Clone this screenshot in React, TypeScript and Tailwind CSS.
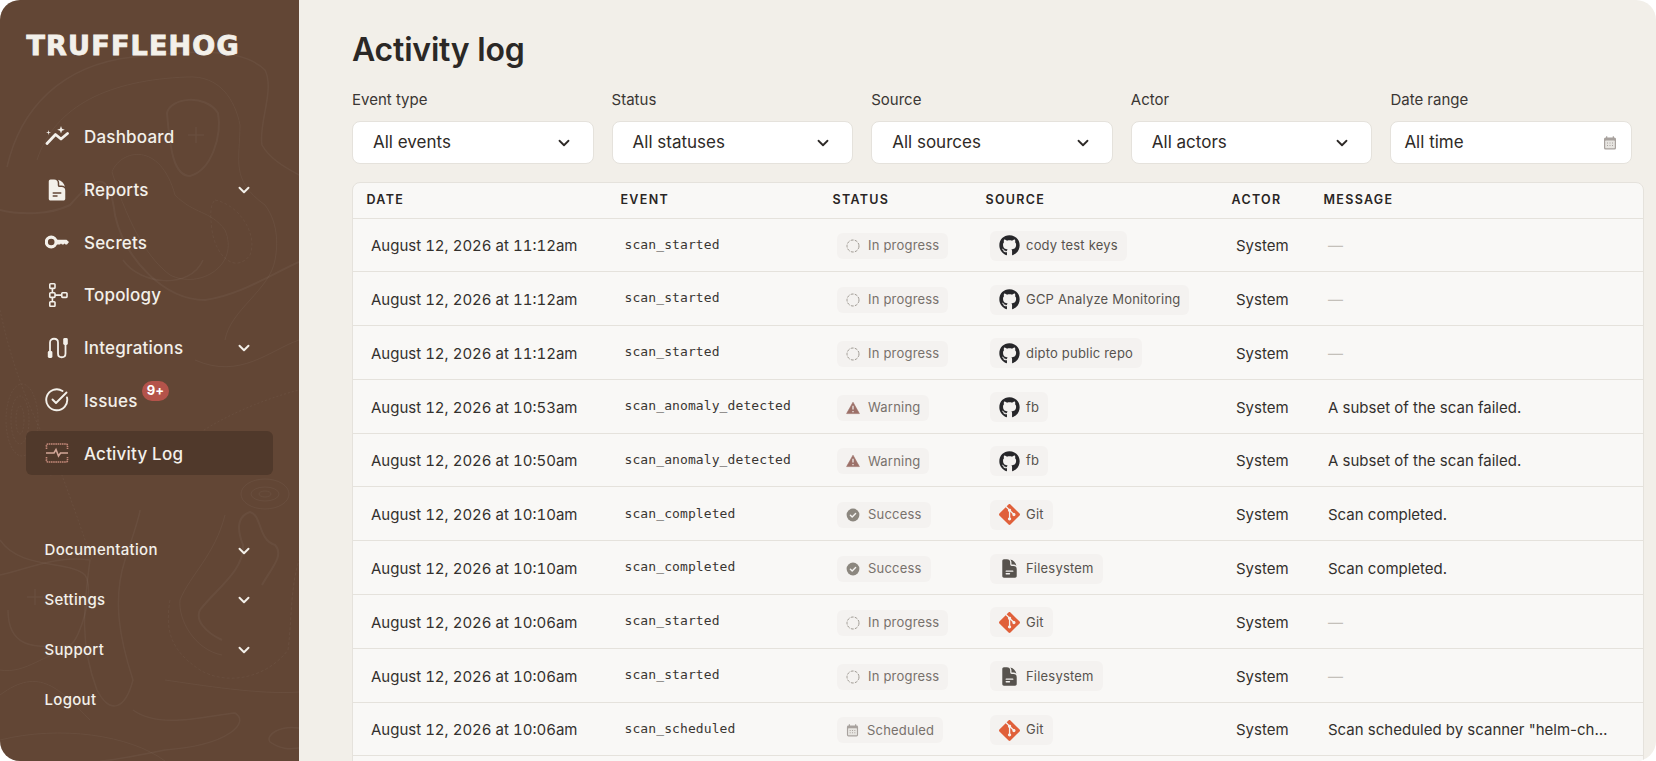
import { ChevronDown } from "lucide-react";
import { FaGithub } from "react-icons/fa";
import { SiGit } from "react-icons/si";
import { HiDocumentText } from "react-icons/hi2";
import type { ReactNode } from "react";

function DashboardIcon() {
  return (
    <svg width="24" height="24" viewBox="0 0 24 24" fill="none" stroke="currentColor">
      <path d="M2 18.5 L10.5 9.5 L16 14 L22.5 8.5" strokeWidth="2.8" strokeLinecap="round" strokeLinejoin="round" />
      <path d="M16 1 L17 3.8 L19.8 4.8 L17 5.8 L16 8.6 L15 5.8 L12.2 4.8 L15 3.8 Z" fill="currentColor" strokeWidth="0" />
      <path d="M3.5 5 L4 7 L6 7.5 L4 8 L3.5 10 L3 8 L1 7.5 L3 7 Z" fill="currentColor" strokeWidth="0" />
    </svg>
  );
}

function KeyIcon() {
  return (
    <svg width="24" height="24" viewBox="0 0 24 24" fill="none">
      <circle cx="6.2" cy="12" r="4.9" stroke="currentColor" strokeWidth="3.2" />
      <path d="M11 9.8 H21.5 L24 12 L22 14.6 H20.5 L19.5 13.4 L18.5 14.6 H17 L16 13.4 L15 14.6 H11 Z" fill="currentColor" />
    </svg>
  );
}

function TopologyIcon() {
  return (
    <svg width="24" height="24" viewBox="0 0 24 24" fill="none" stroke="currentColor" strokeWidth="1.6">
      <rect x="4.8" y="0.8" width="5.2" height="4.6" rx="0.8" />
      <rect x="4.8" y="9.8" width="5.2" height="4.6" rx="0.8" />
      <rect x="4.8" y="18.8" width="5.2" height="4.6" rx="0.8" />
      <rect x="16.8" y="9.8" width="5.2" height="4.6" rx="0.8" />
      <path d="M7.4 5.4 V9.8 M7.4 14.4 V18.8 M10 12.1 H16.8" />
    </svg>
  );
}

function IntegrationsIcon() {
  return (
    <svg width="24" height="24" viewBox="0 0 24 24" fill="none">
      <path d="M5 15 V6.5 C5 1.5 13 1.5 13 6.5 V17.5 C13 22.5 20.5 22.5 20.5 17.5 V8" stroke="currentColor" strokeWidth="1.8" />
      <rect x="2.8" y="15" width="4.6" height="7" rx="1.4" fill="currentColor" />
      <rect x="18.2" y="2" width="4.6" height="7" rx="1.4" fill="currentColor" />
    </svg>
  );
}

function IssuesIcon() {
  return (
    <svg width="24" height="24" viewBox="0 0 24 24" fill="none" stroke="currentColor" strokeWidth="1.9" strokeLinecap="round" strokeLinejoin="round">
      <path d="M22 9.5 A10.5 10.5 0 1 1 17.5 3" />
      <path d="M7.5 11.5 L11 15 L21.5 4.5" />
    </svg>
  );
}

function ActivityIcon() {
  return (
    <svg width="24" height="24" viewBox="0 0 24 24" fill="none" stroke="#c4897a" strokeWidth="1.6">
      <path d="M1.5 8 V5 A1.5 1.5 0 0 1 3 3 H21 A1.5 1.5 0 0 1 22.5 5 V8" strokeDasharray="1.6 0.6" />
      <path d="M1.5 16 V19 A1.5 1.5 0 0 0 3 21 H21 A1.5 1.5 0 0 0 22.5 19 V16" strokeDasharray="1.6 0.6" />
      <path d="M1 12 H9 L11 8.5 L13.5 15 L15.5 12 H23" stroke="#d2a698" />
    </svg>
  );
}

function CalendarIcon({ size = 14, color = "#a8a29e" }: { size?: number; color?: string }) {
  return (
    <svg width={size} height={size} viewBox="0 0 14 14" fill="none">
      <rect x="1" y="1.5" width="12" height="12" rx="1.6" fill={color} />
      <rect x="3" y="0.3" width="1.3" height="2.4" fill={color} />
      <rect x="9.7" y="0.3" width="1.3" height="2.4" fill={color} />
      <rect x="2.2" y="4.6" width="9.6" height="7.6" rx="0.6" fill="#e7e5e1" />
      <path d="M4 7 H5 M6.5 7 H7.5 M9 7 H10 M4 9.5 H5 M6.5 9.5 H7.5 M9 9.5 H10" stroke={color} strokeWidth="1.1" />
    </svg>
  );
}

function ProgressIcon() {
  return (
    <svg width="14" height="14" viewBox="0 0 14 14" fill="none">
      <circle cx="7" cy="7" r="6" stroke="#9f9a93" strokeWidth="1" strokeDasharray="3 1.2" />
    </svg>
  );
}

function WarningIcon() {
  return (
    <svg width="14" height="14" viewBox="0 0 14 14" fill="none">
      <path d="M7 1.2 L13.4 12.6 H0.6 Z" fill="#9c7068" stroke="#9c7068" strokeWidth="0.6" strokeLinejoin="round" />
      <path d="M7 4.8 V8.6 M7 10 V11.2" stroke="#f4f2f0" strokeWidth="1.2" />
    </svg>
  );
}

function SuccessIcon() {
  return (
    <svg width="14" height="14" viewBox="0 0 14 14" fill="none">
      <circle cx="7" cy="7" r="6.4" fill="#8c877f" />
      <path d="M4.4 7.2 L6.2 9 L9.6 5.4" stroke="#f4f2f0" strokeWidth="1.4" strokeLinecap="round" strokeLinejoin="round" />
    </svg>
  );
}

function Contours() {
  return (
    <svg className="absolute inset-0 pointer-events-none" width="299" height="761" viewBox="0 0 299 761" fill="none" stroke="#ffffff" strokeOpacity="0.042">
      <path strokeWidth="2" d="M167 113 C170 98 205 93 218 113 C222 135 212 170 190 176 C174 176 170 150 167 113 Z" />
      <path strokeWidth="1.5" d="M188 135 H204 M196 127 V143 M27 597 H43 M35 589 V605" />
      <path strokeWidth="1.5" d="M7 167 C20 110 60 65 133 57 C180 52 240 45 265 70 C275 90 258 125 262 145 C270 160 290 170 299 175" />
      <path strokeWidth="1" d="M37 160 C55 105 110 80 187 77 C220 75 235 100 240 125 C240 160 230 180 265 205 C280 225 277 250 275 260 C270 290 230 310 225 340" />
      <path strokeWidth="2" d="M0 210 C20 215 50 215 70 205 C100 170 110 175 115 215 C125 260 165 300 205 300 C240 295 270 275 299 262" />
      <path strokeWidth="1" d="M112 172 C120 150 160 140 175 195 C195 215 210 210 225 230 C240 265 200 290 170 275 C150 260 130 230 112 172 Z" />
      <path strokeWidth="1.5" d="M123 260 C140 285 190 290 203 260" />
      <path strokeWidth="1" strokeDasharray="3 2" d="M215 200 C240 205 258 235 250 255 C235 275 215 255 212 230 C210 215 210 205 215 200 Z" />
      <path strokeWidth="1" d="M0 310 C15 380 35 420 60 470 C75 510 85 540 92 560" strokeDasharray="2 2" />
      <g strokeWidth="1" strokeDasharray="2 1.5">
        <ellipse cx="20" cy="420" rx="4" ry="14" />
        <ellipse cx="20" cy="420" rx="9" ry="24" />
        <ellipse cx="22" cy="420" rx="16" ry="36" />
      </g>
      <ellipse cx="265" cy="494" rx="6" ry="3" strokeWidth="1" />
      <ellipse cx="265" cy="494" rx="14" ry="7" strokeWidth="1" />
      <ellipse cx="265" cy="494" rx="24" ry="15" strokeWidth="1" />
      <path strokeWidth="1" d="M195 360 C240 380 270 350 299 340" />
      <path strokeWidth="1" strokeDasharray="2 2" d="M50 475 C90 470 150 475 190 440 C215 420 260 400 299 390" />
      <path strokeWidth="2" d="M222 640 C205 632 195 620 200 610 C215 590 245 570 243 545 C235 525 240 515 250 512 C262 515 258 540 275 545 C285 555 270 570 262 585" />
      <path strokeWidth="1" d="M222 655 C195 650 178 620 180 600 C190 575 215 555 225 515" />
      <path strokeWidth="1" strokeDasharray="3 2" d="M170 600 C165 630 170 650 200 670 C225 685 265 680 288 650 C292 620 290 590 299 560" />
      <path strokeWidth="1.5" d="M0 540 C20 570 70 560 85 575 C95 590 80 640 70 645 C30 650 8 645 8 610" />
      <path strokeWidth="1.5" d="M0 575 C25 570 55 555 90 560 C85 600 78 640 97 690 C110 715 125 710 133 680 C120 640 112 600 125 560 C135 530 140 515 140 510" />
      <path strokeWidth="1.5" d="M133 710 C160 730 210 715 235 713 C250 722 230 745 165 750 C140 755 110 761 100 761" />
      <path strokeWidth="1" d="M165 680 C200 685 260 695 299 692" />
      <path strokeWidth="1" d="M0 740 C60 725 130 735 165 761 M0 695 C40 665 60 690 90 720 M0 670 C25 675 50 650 60 655" />
      <path strokeWidth="1.5" d="M299 728 C280 725 265 735 270 742 C285 752 295 748 299 748" />
    </svg>
  );
}

const navItems: { label: string; icon: ReactNode; chevron?: boolean; active?: boolean; badge?: string }[] = [
  { label: "Dashboard", icon: <DashboardIcon /> },
  { label: "Reports", icon: <HiDocumentText size={28} />, chevron: true },
  { label: "Secrets", icon: <KeyIcon /> },
  { label: "Topology", icon: <TopologyIcon /> },
  { label: "Integrations", icon: <IntegrationsIcon />, chevron: true },
  { label: "Issues", icon: <IssuesIcon />, badge: "9+" },
  { label: "Activity Log", icon: <ActivityIcon />, active: true },
];

const footerItems = [
  { label: "Documentation", chevron: true },
  { label: "Settings", chevron: true },
  { label: "Support", chevron: true },
  { label: "Logout", chevron: false },
];

function Sidebar() {
  return (
    <aside className="relative w-[299px] shrink-0 h-full bg-[#624635] text-[#f3f0ea] overflow-hidden">
      <Contours />
      <div className="relative flex flex-col h-full">
        <div className="ml-[26.5px] mt-[30px] h-[30px] flex items-center font-['DejaVu_Sans'] font-bold text-[27px] leading-none tracking-[1.2px] [-webkit-text-stroke:0.9px_#f3f0ea]">
          TRUFFLEHOG
        </div>
        <nav className="mt-[55px] mx-[26px] w-[247px] flex flex-col gap-[8.7px]">
          {navItems.map((item) => (
            <div
              key={item.label}
              className={
                item.active
                  ? "h-[44px] flex items-center pl-[19px] pr-[20px] rounded-md bg-[#50392b]"
                  : "h-[44px] flex items-center pl-[19px] pr-[20px] rounded-md"
              }
            >
              <span className="w-[24px] h-[24px] flex items-center justify-center">{item.icon}</span>
              <span className={item.active ? "relative top-[2px] ml-[15px] text-[17px] font-medium tracking-[0.2px]" : "relative top-[1px] ml-[15px] text-[17px] font-medium tracking-[0.2px]"}>
                {item.label}
                {item.badge && (
                  <span className="absolute left-[58px] -top-[8px] h-[20px] w-[27px] rounded-full bg-[#b4534a] text-white text-[13px] font-bold flex items-center justify-center">
                    {item.badge}
                  </span>
                )}
              </span>
              {item.chevron && <ChevronDown size={18} strokeWidth={2.6} className="ml-auto" />}
            </div>
          ))}
        </nav>
        <div className="mt-[60px] ml-[44.5px] w-[209px] flex flex-col gap-[18.8px]">
          {footerItems.map((item) => (
            <div key={item.label} className="h-[31px] flex items-center justify-between text-[15px] font-medium tracking-[0.3px]">
              {item.label}
              {item.chevron && <ChevronDown size={18} strokeWidth={2.6} className="mr-[1px]" />}
            </div>
          ))}
        </div>
      </div>
    </aside>
  );
}

const filters = [
  { label: "Event type", value: "All events" },
  { label: "Status", value: "All statuses" },
  { label: "Source", value: "All sources" },
  { label: "Actor", value: "All actors" },
];

function Filters() {
  return (
    <div className="mt-[19px] mr-[12px] grid grid-cols-5 gap-[18px]">
      {filters.map((f) => (
        <div key={f.label}>
          <div className="text-[15px] leading-[20px] text-[#3a3633]">{f.label}</div>
          <div className="mt-[11px] h-[43px] flex items-center justify-between pl-[20px] pr-[20px] rounded-lg bg-white border border-[#e5e2dc] text-[17px] text-[#2e2a27]">
            {f.value}
            <ChevronDown size={18} strokeWidth={2.4} />
          </div>
        </div>
      ))}
      <div>
        <div className="text-[15px] leading-[20px] text-[#3a3633]">Date range</div>
        <div className="mt-[11px] h-[43px] flex items-center justify-between pl-[13px] pr-[14px] rounded-lg bg-white border border-[#e5e2dc] text-[17px] text-[#2e2a27]">
          All time
          <CalendarIcon />
        </div>
      </div>
    </div>
  );
}

type Status = "progress" | "warning" | "success" | "scheduled";
type Source = "github" | "git" | "file";

const statusMeta: Record<Status, { label: string; icon: ReactNode }> = {
  progress: { label: "In progress", icon: <ProgressIcon /> },
  warning: { label: "Warning", icon: <WarningIcon /> },
  success: { label: "Success", icon: <SuccessIcon /> },
  scheduled: { label: "Scheduled", icon: <CalendarIcon size={13} /> },
};

const sourceIcon: Record<Source, ReactNode> = {
  github: <FaGithub size={21} className="text-[#27272a]" />,
  git: <SiGit size={21} className="text-[#e0603a]" />,
  file: <HiDocumentText size={21} className="text-[#57534e]" />,
};

const rows: { date: string; event: string; status: Status; source: Source; name: string; message: string }[] = [
  { date: "August 12, 2026 at 11:12am", event: "scan_started", status: "progress", source: "github", name: "cody test keys", message: "—" },
  { date: "August 12, 2026 at 11:12am", event: "scan_started", status: "progress", source: "github", name: "GCP Analyze Monitoring", message: "—" },
  { date: "August 12, 2026 at 11:12am", event: "scan_started", status: "progress", source: "github", name: "dipto public repo", message: "—" },
  { date: "August 12, 2026 at 10:53am", event: "scan_anomaly_detected", status: "warning", source: "github", name: "fb", message: "A subset of the scan failed." },
  { date: "August 12, 2026 at 10:50am", event: "scan_anomaly_detected", status: "warning", source: "github", name: "fb", message: "A subset of the scan failed." },
  { date: "August 12, 2026 at 10:10am", event: "scan_completed", status: "success", source: "git", name: "Git", message: "Scan completed." },
  { date: "August 12, 2026 at 10:10am", event: "scan_completed", status: "success", source: "file", name: "Filesystem", message: "Scan completed." },
  { date: "August 12, 2026 at 10:06am", event: "scan_started", status: "progress", source: "git", name: "Git", message: "—" },
  { date: "August 12, 2026 at 10:06am", event: "scan_started", status: "progress", source: "file", name: "Filesystem", message: "—" },
  { date: "August 12, 2026 at 10:06am", event: "scan_scheduled", status: "scheduled", source: "git", name: "Git", message: 'Scan scheduled by scanner "helm-chart-testing"' },
];

const headers = ["Date", "Event", "Status", "Source", "Actor", "Message"];

function ActivityTable() {
  return (
    <div className="mt-[18px] h-[600px] rounded-t-lg border border-[#e5e2dc] bg-[#f9f8f6]">
      <table className="w-full table-fixed border-collapse border-b border-[#e5e2dc]">
        <colgroup>
          <col className="w-[254px]" />
          <col className="w-[212px]" />
          <col className="w-[153px]" />
          <col className="w-[246px]" />
          <col className="w-[92px]" />
          <col />
        </colgroup>
        <thead>
          <tr className="h-[35px]">
            {headers.map((h) => (
              <th key={h} className="pl-[13.5px] text-left text-[12.5px] font-semibold uppercase tracking-[1.3px] text-[#292524]">
                {h}
              </th>
            ))}
          </tr>
        </thead>
        <tbody>
          {rows.map((row, i) => (
            <tr key={i} className="h-[53.8px] border-t border-[#e5e2dc]">
              <td className="pl-[18px] pt-[3px] text-[15px] tabular-nums text-[#33302d]">{row.date}</td>
              <td className="pl-[17.5px] pt-[3px] font-['DejaVu_Sans_Mono'] text-[13px] tracking-[0.1px] text-[#3a3633]">
                <span className="relative -top-[2px]">{row.event}</span>
              </td>
              <td className="pl-[18px] pt-[2px]">
                <span className="inline-flex items-center align-middle h-[26px] pl-[9px] pr-[9px] gap-[8px] rounded-md bg-[#f4f2f0] text-[13px] tracking-[0.2px] text-[#78716c]">
                  {statusMeta[row.status].icon}
                  {statusMeta[row.status].label}
                </span>
              </td>
              <td className="pl-[18px] pt-[2px]">
                <span className="inline-flex items-center align-middle h-[30px] pl-[8px] pr-[9px] gap-[6px] rounded-md bg-[#f4f2f0] text-[13px] tracking-[0.2px] text-[#57534e]">
                  <span className="w-[22px] flex justify-center">{sourceIcon[row.source]}</span>
                  {row.name}
                </span>
              </td>
              <td className="pl-[18px] pt-[3px] text-[15px] text-[#33302d]">System</td>
              <td className="pl-[18px] pt-[3px] text-[15px] text-[#33302d]">
                {row.message === "—" ? (
                  <span className="text-[#c4c0ba]">—</span>
                ) : (
                  <div className="max-w-[285px] truncate">{row.message}</div>
                )}
              </td>
            </tr>
          ))}
        </tbody>
      </table>
    </div>
  );
}

export default function App() {
  return (
    <div className="h-screen w-screen overflow-hidden bg-white font-['Inter',sans-serif]">
      <div className="flex h-full rounded-[20px] overflow-hidden bg-[#f2efe9]">
        <Sidebar />
        <main className="flex-1 min-w-0 pl-[53px] pr-[12px] pt-[29px]">
          <h1 className="text-[32px] leading-[42px] font-semibold tracking-[-0.2px] text-[#2b2826]">Activity log</h1>
          <Filters />
          <ActivityTable />
        </main>
      </div>
    </div>
  );
}
